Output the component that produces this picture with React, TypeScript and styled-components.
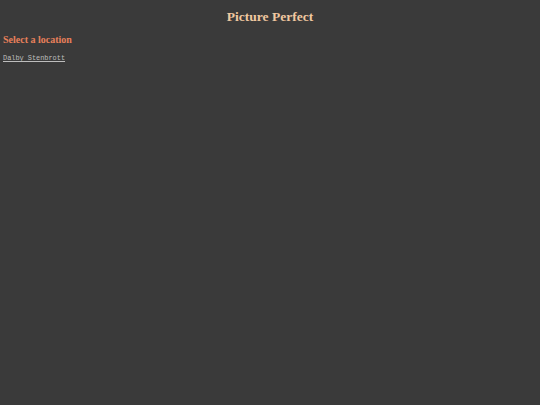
import React from "react";
import styled, { createGlobalStyle } from "styled-components";

const GlobalStyle = createGlobalStyle`
  html, body {
    margin: 0;
    padding: 0;
    background: #3a3a3a;
    min-height: 100%;
  }
  body {
    padding: 3px;
    font-family: "Liberation Serif", "Times New Roman", serif;
  }
`;

const Page = styled.div`
  display: flex;
  flex-direction: column;
`;

const Title = styled.h1`
  margin: 6px 0 0 0;
  text-align: center;
  font-size: 13.5px;
  font-weight: bold;
  color: #f0c8a0;
`;

const Heading = styled.h2`
  margin: 9px 0 0 0;
  font-size: 10px;
  font-weight: bold;
  color: #e8805a;
`;

const LocationList = styled.div`
  display: flex;
  flex-direction: column;
  margin-top: 9px;
`;

const LocationLink = styled.a`
  font-family: "Liberation Mono", "Courier New", monospace;
  font-size: 6.9px;
  color: #bdbdbd;
  text-decoration: underline;
  cursor: pointer;
`;

const locations = ["Dalby Stenbrott"];

export default function App() {
  return (
    <Page>
      <GlobalStyle />
      <Title>Picture Perfect</Title>
      <Heading>Select a location</Heading>
      <LocationList>
        {locations.map((name) => (
          <LocationLink key={name}>{name}</LocationLink>
        ))}
      </LocationList>
    </Page>
  );
}
